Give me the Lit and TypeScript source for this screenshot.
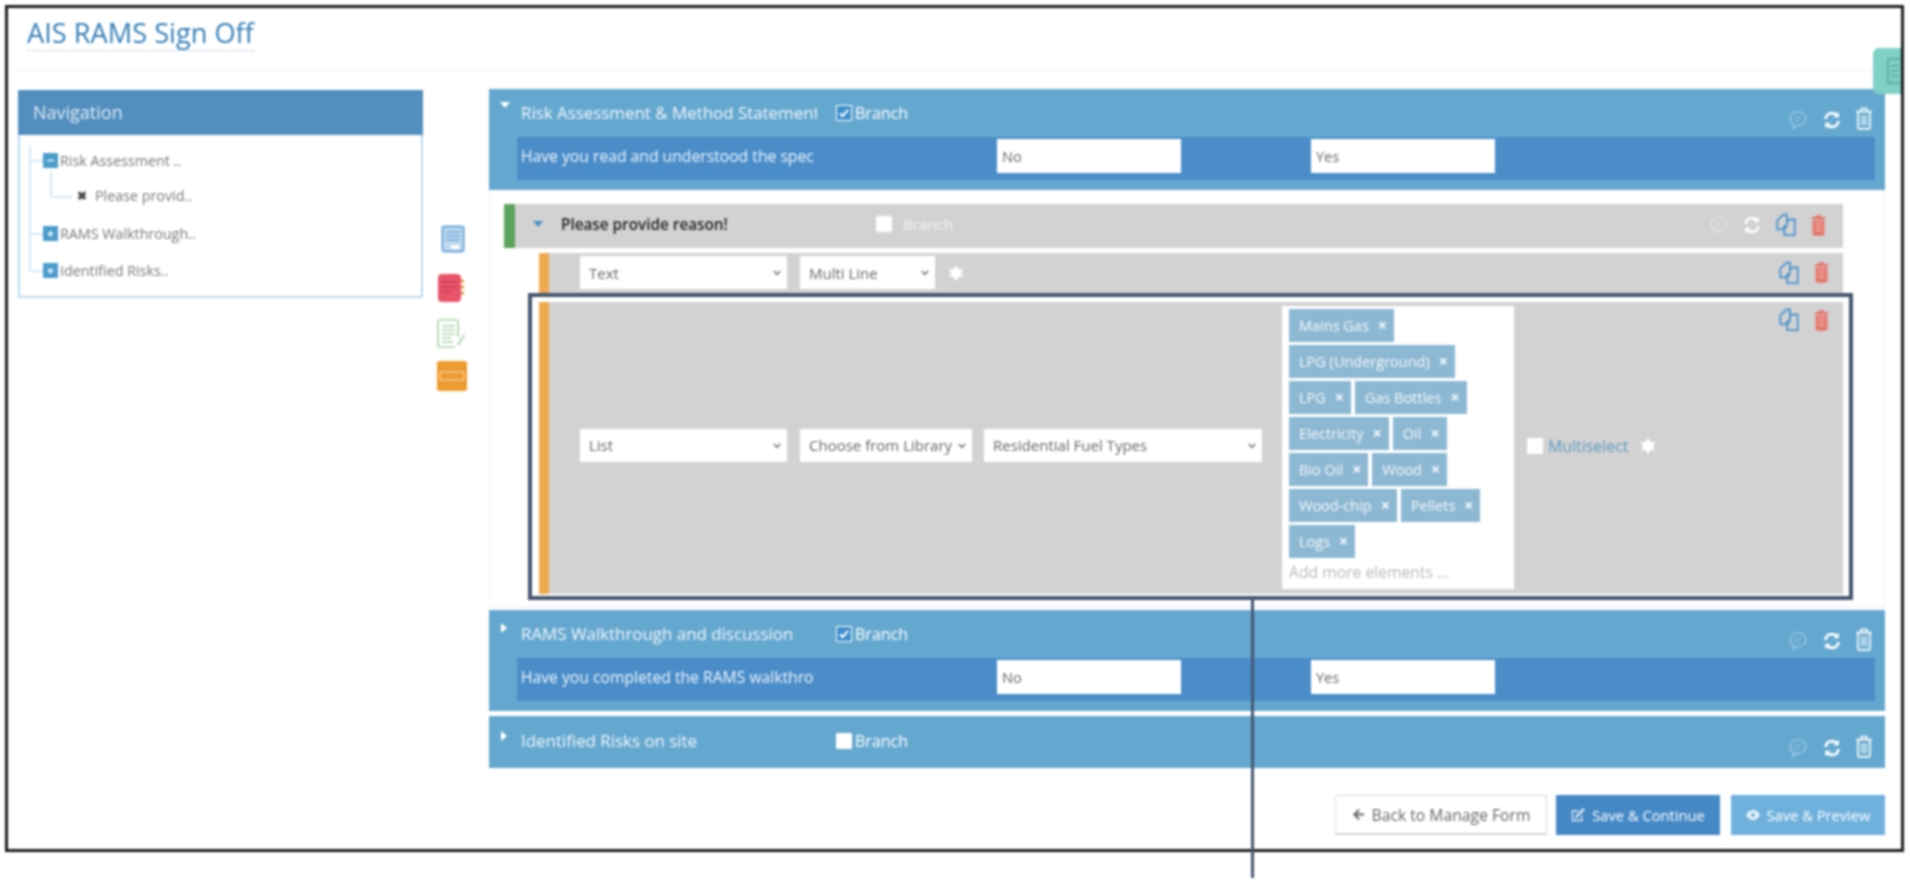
import { LitElement, html, css } from "lit";
import { customElement } from "lit/decorators.js";

const commentIcon = html`<svg class="ic" viewBox="0 0 22 24" width="20" height="22" fill="none" stroke="currentColor" stroke-width="1.5"><path d="M11 3c5 0 8.500 3 8.500 7.500S16 18 11 18c-.8 0-1.500 0-2-.2L6 21.500V17C3.800 15.500 2.500 13 2.500 10.500 2.500 6 6 3 11 3z"/><path d="M7 9h8M7 12.500h6" stroke-width="1"/></svg>`;
const syncIcon = html`<svg class="ic" viewBox="0 0 22 24" width="20" height="22" fill="none" stroke="currentColor" stroke-width="3"><path d="M4 11C4 7 7 4.500 11 4.500c2.500 0 4.300 1 5.500 2.500"/><path d="M18 13c0 4-3 6.500-7 6.500-2.500 0-4.300-1-5.500-2.500"/><path d="M18.500 3v6h-6z" fill="currentColor" stroke="none"/><path d="M3.500 21v-6h6z" fill="currentColor" stroke="none"/></svg>`;
const trashIcon = html`<svg class="ic" viewBox="0 0 22 28" width="20" height="26" fill="none" stroke="currentColor" stroke-width="1.800"><path d="M2.500 7h17M8 7V3.500h6V7M4.500 7v17.500c0 1 .5 1.500 1.500 1.500h10c1 0 1.500-.5 1.500-1.500V7"/><path d="M8.500 11v11M11 11v11M13.500 11v11" stroke-width="1.200"/></svg>`;
const copyIcon = html`<svg class="ic" viewBox="0 0 24 28" width="22" height="26" fill="none" stroke="currentColor" stroke-width="2"><path d="M2.500 18.500V9l7-6.500H13v11l-6 5.500z"/><path d="M13 9.500l3-1.500h5.500v17H10v-6l3-4"/></svg>`;
const redTrash = html`<svg class="ic" viewBox="0 0 20 26" width="17" height="23"><path fill="currentColor" d="M7 1h6v2h5v3H2V3h5zM3 7h14v16c0 1-.8 2-2 2H5c-1.200 0-2-1-2-2z"/><path d="M6 11h8M6 15h8M6 19h8" stroke="#f2c4bf" stroke-width="1.200"/></svg>`;
const star = html`<svg class="star" viewBox="0 0 16 16" width="16" height="16"><circle cx="8" cy="8" r="5.200" fill="#fff"/><path fill="#fff" d="M8 0l2.200 3.500h-4.400zM8 16l-2.200-3.500h4.400zM1 4l4.100.2-2.200 3.800zM15 12l-4.100-.2 2.200-3.800zM15 4l-2.100 4-2.200-3.800zM1 12l2.100-4 2.200 3.800z"/></svg>`;
const chevron = html`<svg class="chev" viewBox="0 0 8 6" width="8" height="6" fill="none" stroke="#777" stroke-width="1.600"><path d="M.8 1l3.200 3.300L7.200 1"/></svg>`;

const selectBox = (cls: string, text: string) =>
  html`<span class="sel-wrap ${cls}"><select class="sel"><option>${text}</option></select>${chevron}</span>`;

const box = (checked: boolean) =>
  html`<span class="box">${checked ? html`<svg viewBox="0 0 16 16" width="14" height="14"><rect width="16" height="16" rx="1" fill="#3f8fcc"/><path d="M3.500 8.500l3 3 6-7" fill="none" stroke="#fff" stroke-width="2.400"/></svg>` : ""}</span>`;

const TAG_ROWS = [
  ["Mains Gas"],
  ["LPG (Underground)"],
  ["LPG", "Gas Bottles"],
  ["Electricity", "Oil"],
  ["Bio Oil", "Wood"],
  ["Wood-chip", "Pellets"],
  ["Logs"],
];

@customElement("app-root")
export class AppRoot extends LitElement {
  static styles = css`
    :host { display: block; position: relative; width: 1910px; height: 883px; overflow: hidden; background: #fff; font-family: "Open Sans", "Noto Sans", sans-serif; color: #666; }
    * { box-sizing: border-box; }
    .blur { filter: blur(0.8px); width: 1910px; height: 883px; padding: 5px 6px 0 5px; position: relative; }
    .frame { position: relative; height: 847px; border: 3px solid #1c1c1c; padding: 0 14px 0 10px; background: #fff; }

    .head { height: 64px; border-bottom: 1px solid #f0f0f0; padding: 8px 0 0 9px; }
    .title { display: inline-block; font-size: 27.200px; line-height: 33px; color: #337fb8; border-bottom: 1px dashed #b5cfe3; padding-bottom: 1px; }

    .main { display: flex; align-items: flex-start; padding-top: 17px; }
    .nav { width: 405px; height: 208px; margin-top: 1px; border: 2px solid #bcd8ec; border-top: 0; flex: none; }
    .nav-head { height: 45px; margin: 0 -2px; background: #528fbf; color: #dfeaf3; font-size: 18px; line-height: 45px; padding-left: 15px; }
    .tree { position: relative; padding: 18px 0 0 23px; font-size: 14.300px; color: #777; }
    .tree::before { content: ""; position: absolute; left: 9px; top: 10px; height: 125px; border-left: 2px solid #d5e7f3; }
    .node { position: relative; display: flex; align-items: center; gap: 2px; height: 15px; white-space: nowrap; }
    .node::before { content: ""; position: absolute; left: -13px; width: 13px; top: 7px; border-top: 2px solid #d5e7f3; }
    .node + .node { margin-top: 22px; }
    .node.child { margin: 20px 0 23px 34px; height: 15px; gap: 8px; }
    .node.child::before { left: -25px; width: 20px; top: 8px; }
    .node.child::after { content: ""; position: absolute; left: -27px; top: -17px; height: 26px; border-left: 2px solid #d5e7f3; }
    .pm { width: 15px; height: 15px; background: #4a9ccb; color: #fff; display: flex; align-items: center; justify-content: center; font-size: 13px; line-height: 13px; font-weight: 700; }
    .x { color: #444; font-size: 12px; font-weight: 700; }

    .tools { width: 66px; flex: none; display: flex; flex-direction: column; padding-top: 136px; }
    .tools svg { display: block; }
    .t1 { margin-left: 18px; }
    .t2 { margin: 21px 0 0 15px; }
    .t3 { margin: 17px 0 0 14px; }
    .t4 { margin: 13px 0 0 14px; }

    .builder { width: 1396px; flex: none; }
    .sec { position: relative; background: #65a8cf; color: #fff; padding-bottom: 10px; }
    .sec-head { display: flex; align-items: center; height: 48px; position: relative; padding: 0 0 0 32px; }
    .tri { position: absolute; left: 11px; top: 13px; width: 0; height: 0; border-left: 5px solid transparent; border-right: 5px solid transparent; border-top: 6px solid #fff; }
    .tri.r { border: 0; border-top: 5px solid transparent; border-bottom: 5px solid transparent; border-left: 6px solid #fff; left: 12px; }
    .label { width: 296px; white-space: nowrap; overflow: hidden; flex: none; font-size: 16.900px; color: #f2f7fb; line-height: 34px; }
    .check { display: flex; align-items: center; gap: 3px; margin-left: 19px; font-size: 16px; }
    .box { width: 16px; height: 16px; background: #fff; border-radius: 1px; display: flex; align-items: center; justify-content: center; flex: none; }
    .actions { margin-left: auto; display: flex; align-items: center; }
    .actions span { display: block; }
    .ic { display: block; }
    .sec .actions { color: #fff; padding: 14px 11px 0 0; gap: 14px; }
    .sec .a-comment { color: #9ccbe6; }
    .sec .a-trash { margin: -4px 0 0 -2px; }
    .bar { display: flex; align-items: flex-start; height: 43px; margin: 0 10px 0 28px; background: #4a8dc9; padding: 2px 0 0 4px; }
    .bar .label { color: #eef5fb; font-size: 15.700px; }
    .opt { width: 184px; height: 34px; border: 0; outline: 0; padding: 0 0 0 5px; background: #fff; color: #666; font: 14.500px "Open Sans", sans-serif; flex: none; border-radius: 0; }
    .opt.no { margin-left: 180px; }
    .opt.yes { margin-left: 130px; }

    .sub { height: 417px; border-left: 1px solid #eef3f8; border-right: 1px solid #eef3f8; border-bottom: 1px solid #e4ebf2; padding: 14px 0 0 14px; display: flex; flex-direction: column; align-items: flex-start; margin-bottom: 3px; }
    .row { width: 1339px; background: #d2d2d2; display: flex; align-items: center; }
    .qrow { height: 44px; border-left: 11px solid #5ba35c; padding: 0 0 4px 18px; color: #222; font-size: 15.300px; }
    .qrow .tri { position: static; border-top-color: #3f8fcc; margin-right: 18px; }
    .qname { width: 315px; flex: none; font-weight: 600; }
    .qrow .check { margin-left: 0; gap: 11px; color: #f1f1f1; font-size: 15.200px; }
    .qrow .actions { padding: 2px 16px 0 0; gap: 13px; color: #fff; }
    .qrow .a-comment { color: #e4e4e4; }
    .a-copy { color: #4d93d0; }
    .a-red { color: #e5766b; }
    .frow { height: 40px; width: 1304px; margin: 5px 0 0 35px; border-left: 10px solid #f0a94d; padding: 0 0 1px 31px; }
    .sel-wrap { position: relative; display: block; height: 33px; flex: none; }
    .sel { appearance: none; -webkit-appearance: none; width: 100%; height: 100%; display: block; border: 0; outline: 0; border-radius: 0; background: #fff; color: #666; font: 15px "Open Sans", sans-serif; padding: 0 0 0 9px; }
    .chev { position: absolute; right: 6px; top: 14px; }
    .w-type { width: 207px; }
    .w-mode { width: 135px; margin-left: 13px; }
    .w-lib { width: 172px; margin-left: 13px; }
    .w-list { width: 278px; margin-left: 12px; }
    .frow .star { margin-left: 13px; }
    .frow .actions { padding-right: 13px; gap: 13px; }

    .hl { width: 1325px; height: 307px; margin-left: 24px; border: 4px solid #44566f; padding: 5px 6px 2px 7px; }
    .hl .frow { width: 100%; height: 100%; margin: 0; position: relative; padding-bottom: 0; }
    .hl .sel-wrap { margin-top: -6px; }
    .tagbox { width: 232px; height: 283px; margin: -2px 0 0 20px; background: #fff; padding: 3px 7px 0; flex: none; }
    .tagrow { display: flex; gap: 4px; margin-bottom: 3px; }
    .tag { height: 33px; background: #8db8d3; color: #f4f8fb; display: flex; align-items: center; padding: 0 7px 0 10px; font-size: 14.500px; gap: 9px; white-space: nowrap; }
    .tag b { font-size: 16px; font-weight: 700; }
    .more { font-size: 15.700px; color: #bbb; margin-top: 3px; white-space: nowrap; }
    .ms { display: flex; align-items: center; gap: 5px; margin: -4px 0 0 13px; color: #5e9cc0; font-size: 15.900px; }
    .ms .star { margin-left: 7px; }
    .hl .actions { position: absolute; right: 13px; top: 5px; padding: 0; }

    .s3 { margin-top: 5px; height: 52px; padding: 0; }
    .s3 .sec-head { height: 50px; }
    .s3 .tri { top: 15px; }

    .btns { display: flex; justify-content: flex-end; margin-top: 27px; font-size: 14.700px; }
    .btn { height: 40px; display: flex; align-items: center; justify-content: center; gap: 7px; color: #fff; white-space: nowrap; }
    .back { width: 212px; background: #fff; border: 1px solid #d8dfe5; border-bottom: 2px solid #cfd8df; color: #666; font-size: 15.700px; }
    .cont { width: 164px; margin-left: 9px; background: #4488c5; }
    .prev { width: 154px; margin-left: 11px; background: #6fb1dc; }

    .teal { position: absolute; top: 40px; right: 0; width: 28px; height: 46px; background: #7fd0c5; border-radius: 6px 0 0 6px; display: flex; align-items: center; justify-content: flex-end; }
    .callout { position: absolute; left: 1251px; top: 600px; width: 3px; height: 278px; background: #44566f; }
  `;

  private section(cls: string, title: string, checked: boolean, q?: string, open = false) {
    return html`<div class="sec ${cls}">
      <div class="sec-head">
        <span class="tri ${open ? "" : "r"}"></span>
        <span class="label">${title}</span>
        <span class="check">${box(checked)}Branch</span>
        <div class="actions">
          <span class="a-comment">${commentIcon}</span><span class="a-sync">${syncIcon}</span><span class="a-trash">${trashIcon}</span>
        </div>
      </div>
      ${q
        ? html`<div class="bar">
            <span class="label">${q}</span>
            <input class="opt no" .value=${"No"} />
            <input class="opt yes" .value=${"Yes"} />
          </div>`
        : ""}
    </div>`;
  }

  private editActions() {
    return html`<div class="actions"><span class="a-copy">${copyIcon}</span><span class="a-red">${redTrash}</span></div>`;
  }

  render() {
    return html`<div class="blur">
      <div class="frame">
        <div class="head"><span class="title">AIS RAMS Sign Off</span></div>
        <div class="main">
          <aside class="nav">
            <div class="nav-head">Navigation</div>
            <div class="tree">
              <div class="node"><span class="pm">−</span>Risk Assessment ..</div>
              <div class="node child"><span class="x">✖</span>Please provid..</div>
              <div class="node"><span class="pm">+</span>RAMS Walkthrough..</div>
              <div class="node"><span class="pm">+</span>Identified Risks..</div>
            </div>
          </aside>
          <div class="tools">
            <svg class="t1" width="24" height="28" viewBox="0 0 24 28"><rect x="1.500" y="1.500" width="21" height="25" rx="2" fill="#c0d9ee" stroke="#6ba6da" stroke-width="2"/><path d="M5 7h14M5 11h14M5 15h14" stroke="#6ba6da" stroke-width="1.500"/><rect x="10" y="20" width="8" height="4" fill="#fff"/></svg>
            <svg class="t2" width="27" height="28" viewBox="0 0 27 28"><rect x="0" y="0" width="23" height="28" rx="4" fill="#e9546b"/><path d="M3 8h16M3 13h16M3 18h10" stroke="#c63d52" stroke-width="1.500"/><path d="M23 7h3M23 13h3M23 19h3" stroke="#d99a3c" stroke-width="3"/></svg>
            <svg class="t3" width="28" height="29" viewBox="0 0 28 29" fill="none" stroke="#a9d2a9" stroke-width="1.600"><path d="M21 18V3c0-1-.8-2-2-2H3C2 1 1 2 1 3v23c0 1 1 2 2 2h15"/><path d="M5 7h13M5 11h13M5 15h13M5 19h9M5 23h11"/><path d="M27 16l-6 10" stroke-width="2"/></svg>
            <svg class="t4" width="30" height="30" viewBox="0 0 30 30"><rect width="30" height="30" rx="2" fill="#ee9b30"/><rect x="3" y="11" width="24" height="8" rx="2" fill="none" stroke="#f6cd92" stroke-width="1.500"/></svg>
          </div>
          <div class="builder">
            ${this.section("s1", "Risk Assessment & Method Statement", true, "Have you read and understood the spec", true)}
            <div class="sub">
              <div class="row qrow">
                <span class="tri"></span>
                <span class="qname">Please provide reason!</span>
                <span class="check">${box(false)}Branch</span>
                <div class="actions"><span class="a-comment">${commentIcon}</span><span class="a-sync">${syncIcon}</span><span class="a-copy">${copyIcon}</span><span class="a-red">${redTrash}</span></div>
              </div>
              <div class="row frow">
                ${selectBox("w-type", "Text")}
                ${selectBox("w-mode", "Multi Line")}
                ${star}
                ${this.editActions()}
              </div>
              <div class="hl">
                <div class="row frow">
                  ${selectBox("w-type", "List")}
                  ${selectBox("w-lib", "Choose from Library")}
                  ${selectBox("w-list", "Residential Fuel Types")}
                  <div class="tagbox">
                    ${TAG_ROWS.map(
                      (r) => html`<div class="tagrow">${r.map((t) => html`<span class="tag">${t}<b>×</b></span>`)}</div>`
                    )}
                    <div class="more">Add more elements ...</div>
                  </div>
                  <div class="ms">${box(false)}Multiselect ${star}</div>
                  ${this.editActions()}
                </div>
              </div>
            </div>
            ${this.section("s2", "RAMS Walkthrough and discussion", true, "Have you completed the RAMS walkthro")}
            ${this.section("s3", "Identified Risks on site", false)}
            <div class="btns">
              <div class="btn back"><svg width="13" height="13" viewBox="0 0 14 14" fill="#666"><path d="M7 1L1 7l6 6 1.500-1.500L5.200 8.200H13V5.800H5.200l3.300-3.300z"/></svg>Back to Manage Form</div>
              <div class="btn cont"><svg width="14" height="14" viewBox="0 0 14 14" fill="none" stroke="#dceaf5" stroke-width="1.300"><path d="M11 8v4.500H1.500V3H7"/><path d="M5 9.500l.5-2.500L12 1l1 1-6 6.500z"/></svg>Save &amp; Continue</div>
              <div class="btn prev"><svg width="14" height="10" viewBox="0 0 14 10"><path fill="#e6f2fa" d="M7 0c3 0 5.500 2 7 5-1.500 3-4 5-7 5S1.500 8 0 5c1.500-3 4-5 7-5z"/><circle cx="7" cy="5" r="2" fill="#6fb1dc"/></svg>Save &amp; Preview</div>
            </div>
          </div>
        </div>
        <div class="teal"><svg width="14" height="28" viewBox="0 0 14 28" fill="none" stroke="#5fb3a8" stroke-width="2"><rect x="1" y="2" width="14" height="24"/><path d="M4 9h8M4 14h8M4 19h8"/></svg></div>
      </div>
      <div class="callout"></div>
    </div>`;
  }
}
